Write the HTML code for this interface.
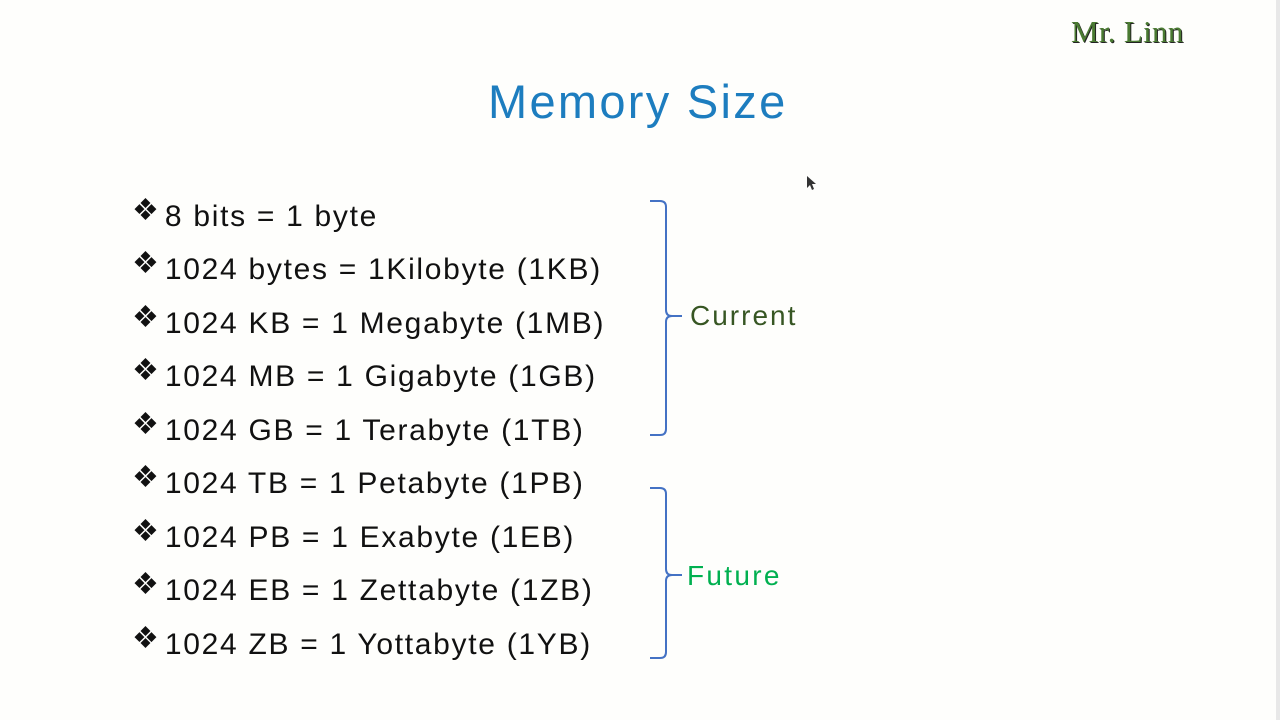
<!DOCTYPE html>
<html><head><meta charset="utf-8"><style>
html,body{margin:0;padding:0}
body{width:1280px;height:720px;background:#fefefc;position:relative;overflow:hidden;font-family:"Liberation Sans",sans-serif}
.t{position:absolute;white-space:nowrap}
.li{position:absolute;left:132px;font-size:30px;letter-spacing:1.7px;color:#111;white-space:nowrap;line-height:1}
.li b{font-weight:normal;font-size:30px;position:relative;top:-6px;margin-right:6px;letter-spacing:0}
</style></head><body>
<div style="position:absolute;right:0;top:0;width:4px;height:720px;background:#e8e8e8"></div>
<div class="t" style="left:1071px;top:14px;font-family:'Liberation Serif',serif;font-size:31px;letter-spacing:0.3px;color:#4a7a32;text-shadow:1px 1px 0 #222">Mr. Linn</div>
<div class="t" style="left:488px;top:74px;font-size:47px;letter-spacing:2.3px;color:#1d7dbf">Memory Size</div>
<div class="li" style="top:202px"><b>❖</b>8 bits = 1 byte</div>
<div class="li" style="top:255px"><b>❖</b>1024 bytes = 1Kilobyte (1KB)</div>
<div class="li" style="top:309px"><b>❖</b>1024 KB = 1 Megabyte (1MB)</div>
<div class="li" style="top:362px"><b>❖</b>1024 MB = 1 Gigabyte (1GB)</div>
<div class="li" style="top:416px"><b>❖</b>1024 GB = 1 Terabyte (1TB)</div>
<div class="li" style="top:469px"><b>❖</b>1024 TB = 1 Petabyte (1PB)</div>
<div class="li" style="top:523px"><b>❖</b>1024 PB = 1 Exabyte (1EB)</div>
<div class="li" style="top:576px"><b>❖</b>1024 EB = 1 Zettabyte (1ZB)</div>
<div class="li" style="top:630px"><b>❖</b>1024 ZB = 1 Yottabyte (1YB)</div>
<svg style="position:absolute;left:0;top:0" width="1280" height="720">
<g fill="none" stroke="#4472c4" stroke-width="2">
<path d="M650 201 H660 Q666 201 666 207 V310 Q666 316 672 316 H682 M672 316 Q666 316 666 322 V429 Q666 435 660 435 H650"/>
<path d="M650 488 H660 Q666 488 666 494 V569 Q666 575 672 575 H682 M672 575 Q666 575 666 581 V652 Q666 658 660 658 H650"/>
</g>
<path d="M807 176 V188 L810 185 L812 190 L814 189 L812 184 H816 Z" fill="#333"/>
</svg>
<div class="t" style="left:690px;top:300px;font-size:28px;letter-spacing:2px;color:#375623">Current</div>
<div class="t" style="left:687px;top:560px;font-size:28px;letter-spacing:2.3px;color:#00b050">Future</div>
</body></html>
